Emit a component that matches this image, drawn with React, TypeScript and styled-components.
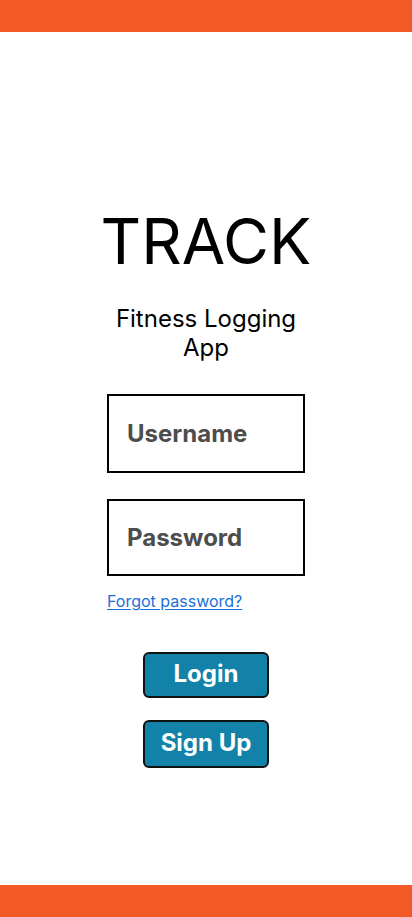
import React from "react";
import styled, { createGlobalStyle } from "styled-components";

const GlobalStyle = createGlobalStyle`
  html, body {
    margin: 0;
    padding: 0;
    background: #ffffff;
  }
  body {
    font-family: Inter, "Liberation Sans", sans-serif;
  }
  * { box-sizing: border-box; }
`;

const Page = styled.div`
  min-height: 917px;
  display: flex;
  flex-direction: column;
`;

const Bar = styled.div`
  height: 32px;
  background: #f15a24;
  flex-shrink: 0;
`;

const Main = styled.main`
  flex: 1;
  display: flex;
  flex-direction: column;
  align-items: center;
  padding-top: 177px;
`;

const Title = styled.h1`
  margin: 0;
  font-family: Inter, "Liberation Sans", sans-serif;
  font-weight: 400;
  font-size: 63px;
  line-height: 64px;
  color: #000;
`;

const Subtitle = styled.p`
  margin: 31px 0 0;
  width: 200px;
  text-align: center;
  font-size: 24px;
  line-height: 29px;
  color: #000;
`;

const Form = styled.form`
  margin-top: 32px;
  width: 198px;
  display: flex;
  flex-direction: column;
`;

const Field = styled.div<{ $h: number; $mt: number }>`
  height: ${(p) => p.$h}px;
  margin-top: ${(p) => p.$mt}px;
  border: 2px solid #000;
  display: flex;
  align-items: center;
  padding-left: 18px;
  font-size: 24px;
  font-weight: 700;
  color: #4d4d4d;
`;

const ForgotLink = styled.a`
  margin-top: 15px;
  align-self: flex-start;
  font-size: 16px;
  line-height: 20px;
  color: #1a6fd6;
  text-decoration: underline;
  text-underline-offset: 2px;
`;

const Button = styled.button<{ $mt: number; $h: number }>`
  margin-top: ${(p) => p.$mt}px;
  width: 126px;
  height: ${(p) => p.$h}px;
  align-self: center;
  background: #1282a8;
  border: 2px solid #111;
  border-radius: 6px;
  color: #fff;
  font-family: Inter, "Liberation Sans", sans-serif;
  font-size: 24px;
  font-weight: 700;
  padding: 0 0 3px;
  display: flex;
  align-items: center;
  justify-content: center;
`;

export default function App() {
  return (
    <>
      <GlobalStyle />
      <Page>
        <Bar />
        <Main>
          <Title>TRACK</Title>
          <Subtitle>Fitness Logging App</Subtitle>
          <Form onSubmit={(e) => e.preventDefault()}>
            <Field $h={79} $mt={0}>Username</Field>
            <Field $h={77} $mt={26}>Password</Field>
            <ForgotLink href="#">Forgot password?</ForgotLink>
            <Button type="submit" $mt={41} $h={46}>Login</Button>
            <Button type="button" $mt={22} $h={48}>Sign Up</Button>
          </Form>
        </Main>
        <Bar />
      </Page>
    </>
  );
}
